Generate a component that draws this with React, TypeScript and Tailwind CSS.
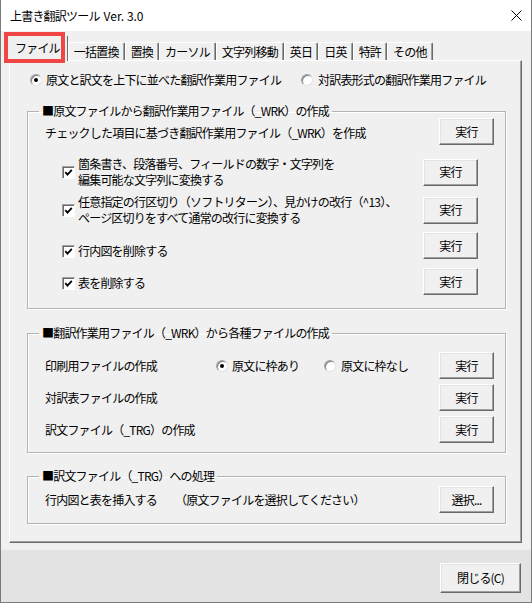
import React from "react";

function Btn({ label, w = "w-[55px]", h = "h-[27px]" }: { label: string; w?: string; h?: string }) {
  return (
    <button
      className={`${w} ${h} shrink-0 flex items-center justify-center bg-[#f0f0f0] border border-t-white border-l-white border-r-[#696969] border-b-[#696969] shadow-[inset_-1px_-1px_0_#a0a0a0,inset_1px_1px_0_#e3e3e3] text-[12px] text-black`}
    >
      {label}
    </button>
  );
}

function Radio({ checked }: { checked?: boolean }) {
  return (
    <span className="w-[12px] h-[12px] shrink-0 rounded-full bg-white border border-t-[#a0a0a0] border-l-[#a0a0a0] border-b-[#e3e3e3] border-r-[#e3e3e3] shadow-[inset_1px_1px_0_#808080] flex items-center justify-center">
      {checked && <span className="w-[4px] h-[4px] rounded-full bg-black" />}
    </span>
  );
}

function Check() {
  return (
    <span className="w-[13px] h-[13px] shrink-0 bg-white border border-t-[#a0a0a0] border-l-[#a0a0a0] border-b-white border-r-white shadow-[inset_1px_1px_0_#696969] flex items-center justify-center">
      <svg width="9" height="9" viewBox="0 0 9 9">
        <path d="M1.3 4.2 L3.5 6.6 L7.8 1.8" fill="none" stroke="#000" strokeWidth="1.8" />
      </svg>
    </span>
  );
}

function Group({ title, children, className = "" }: { title: string; children: React.ReactNode; className?: string }) {
  return (
    <fieldset className={`ml-[17px] w-[479px] border border-[#b4b4b4] shadow-[1px_1px_0_#ffffff,inset_1px_1px_0_#ffffff] ${className}`}>
      <legend className="ml-[11px] px-[3px] leading-[14px]">{title}</legend>
      {children}
    </fieldset>
  );
}

const tabs = ["一括置換", "置換", "カーソル", "文字列移動", "英日", "日英", "特許", "その他"];

export default function App() {
  return (
    <div className="w-[532px] h-[603px] flex flex-col border-x border-b border-[#7a7a7a] bg-[#f0f0f0] text-[12px] text-black tracking-[-0.8px] font-['Noto_Sans_CJK_JP',sans-serif] relative">
      {/* title bar */}
      <div className="h-[31px] shrink-0 bg-white flex items-center justify-between pl-[9px] pr-[9px]">
        <span className="flex items-center">
          上書き翻訳ツール<span className="ml-[4px] tracking-normal">Ver. 3.0</span>
        </span>
        <svg width="11" height="11" viewBox="0 0 11 11">
          <path d="M0.5 0.5 L10.5 10.5 M10.5 0.5 L0.5 10.5" stroke="#000" strokeWidth="1" />
        </svg>
      </div>

      {/* tabs */}
      <div className="h-[29px] shrink-0 flex items-end pl-[6px]">
        <div className="relative z-10 h-[26px] -mb-[1px] px-[7px] pt-[3px] bg-[#f0f0f0] border border-b-0 border-t-white border-l-white border-r-[#696969] rounded-t-[2px]">
          ファイル
        </div>
        {tabs.map((t) => (
          <div
            key={t}
            className="h-[18px] px-[5px] flex items-center bg-[#f0f0f0] border border-b-0 border-t-white border-l-white border-r-[#696969] shadow-[inset_-1px_0_0_#a0a0a0] rounded-t-[2px] leading-none"
          >
            {t}
          </div>
        ))}
      </div>

      {/* panel */}
      <div className="ml-[8px] w-[513px] h-[483px] shrink-0 border border-t-white border-l-white border-r-[#696969] border-b-[#696969] shadow-[inset_-1px_-1px_0_#a0a0a0]">
        <div className="mt-[11px] pl-[20px] h-[16px] flex items-center">
          <label className="w-[271px] flex items-center gap-[4px]">
            <Radio checked />
            <span>原文と訳文を上下に並べた翻訳作業用ファイル</span>
          </label>
          <label className="flex items-center gap-[5px]">
            <Radio />
            <span>対訳表形式の翻訳作業用ファイル</span>
          </label>
        </div>

        <Group title="■原文ファイルから翻訳作業用ファイル（_WRK）の作成" className="mt-[16px] pb-[13px]">
          <div className="h-[27px] flex items-center justify-between pl-[17px] pr-[11px]">
            <span className="pt-[3px]">チェックした項目に基づき翻訳作業用ファイル（_WRK）を作成</span>
            <Btn label="実行" />
          </div>
          <div className="mt-[11px] h-[32px] flex items-center justify-between pl-[34px] pr-[27px]">
            <div className="flex items-center gap-[3px] leading-[16px]">
              <Check />
              <div>
                <div>箇条書き、段落番号、フィールドの数字・文字列を</div>
                <div>編集可能な文字列に変換する</div>
              </div>
            </div>
            <Btn label="実行" />
          </div>
          <div className="mt-[6px] h-[32px] flex items-center justify-between pl-[34px] pr-[27px]">
            <div className="flex items-center gap-[3px] leading-[16px]">
              <Check />
              <div>
                <div>任意指定の行区切り（ソフトリターン）、見かけの改行（^13）、</div>
                <div>ページ区切りをすべて通常の改行に変換する</div>
              </div>
            </div>
            <Btn label="実行" />
          </div>
          <div className="mt-[6px] flex items-start justify-between pl-[34px] pr-[27px]">
            <div className="mt-[11px] flex items-center gap-[3px] leading-[16px]">
              <Check />
              <span>行内図を削除する</span>
            </div>
            <Btn label="実行" />
          </div>
          <div className="mt-[9px] flex items-start justify-between pl-[34px] pr-[27px]">
            <div className="mt-[7px] flex items-center gap-[3px] leading-[16px]">
              <Check />
              <span>表を削除する</span>
            </div>
            <Btn label="実行" />
          </div>
        </Group>

        <Group title="■翻訳作業用ファイル（_WRK）から各種ファイルの作成" className="mt-[17px] pb-[9px]">
          <div className="mt-[12px] flex flex-col gap-[5px] pl-[17px] pr-[11px]">
            <div className="h-[27px] flex items-center">
              <span className="w-[171px]">印刷用ファイルの作成</span>
              <label className="w-[108px] flex items-center gap-[4px]">
                <Radio checked />
                <span>原文に枠あり</span>
              </label>
              <label className="flex items-center gap-[5px]">
                <Radio />
                <span>原文に枠なし</span>
              </label>
              <div className="ml-auto">
                <Btn label="実行" />
              </div>
            </div>
            <div className="h-[27px] flex items-center justify-between">
              <span>対訳表ファイルの作成</span>
              <Btn label="実行" />
            </div>
            <div className="h-[27px] flex items-center justify-between">
              <span>訳文ファイル（_TRG）の作成</span>
              <Btn label="実行" />
            </div>
          </div>
        </Group>

        <Group title="■訳文ファイル（_TRG）への処理" className="mt-[16px] pb-[10px]">
          <div className="mt-[3px] h-[27px] flex items-center pl-[17px] pr-[11px]">
            <span className="w-[130px]">行内図と表を挿入する</span>
            <span>（原文ファイルを選択してください）</span>
            <div className="ml-auto">
              <Btn label="選択..." />
            </div>
          </div>
        </Group>
      </div>

      {/* footer */}
      <div className="mt-[7px] flex-1 bg-[#e3e3e3] flex justify-end items-start pt-[13px] pr-[10px]">
        <Btn label="閉じる(C)" w="w-[81px]" h="h-[30px]" />
      </div>

      {/* annotation highlight */}
      <div className="absolute left-[3px] top-[32px] w-[61px] h-[31px] border-[4px] border-[#f04646] z-20 pointer-events-none" />
    </div>
  );
}
